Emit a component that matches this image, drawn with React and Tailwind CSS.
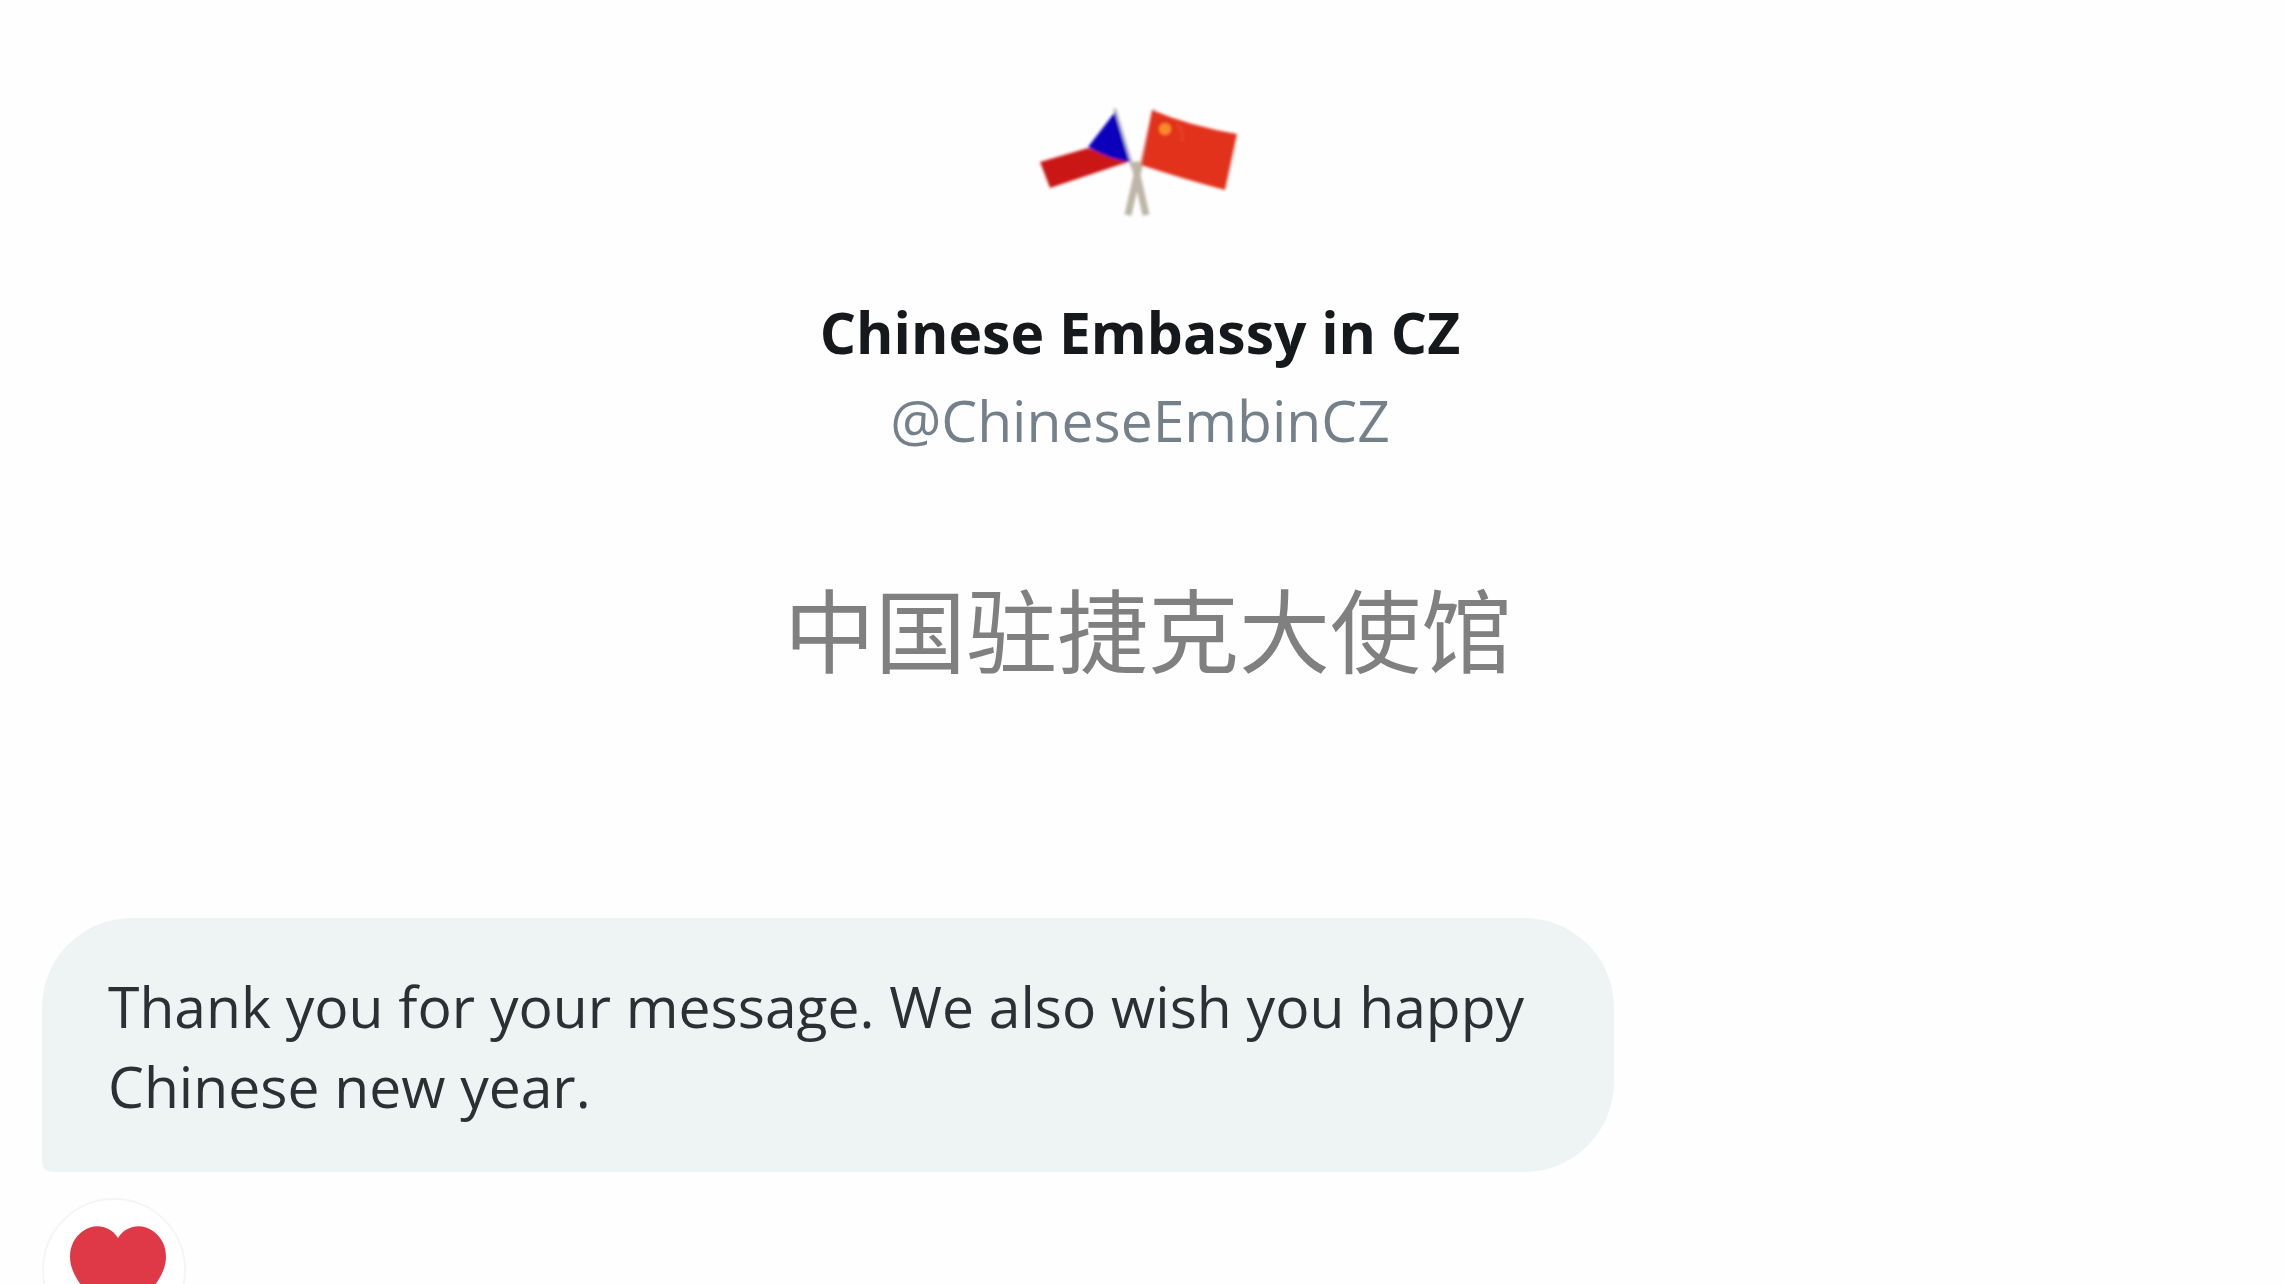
import React, { useState } from 'react';

const FlagsAvatar = () => (
  <svg viewBox="0 0 280 180" className="h-[180px] w-[280px]" role="img" aria-label="Crossed Czech and Chinese flags">
    <defs>
      <filter id="soften" x="-10%" y="-10%" width="120%" height="120%">
        <feGaussianBlur stdDeviation="1.5" />
      </filter>
    </defs>
    <g filter="url(#soften)">
      {/* Poles */}
      <path d="M115 30L132 86" stroke="#c9c6cc" strokeWidth="4" fill="none" strokeLinecap="round" />
      <path d="M154 31L141 86" stroke="#d8b5ae" strokeWidth="4" fill="none" strokeLinecap="round" />
      <path d="M134 82L146 135M140 82L128 135" stroke="#bdb6a6" strokeWidth="7" fill="none" />
      {/* Czech flag */}
      <path d="M40 82L88 68L131 81L50 108Z" fill="#cb1716" />
      <path d="M115 32L130 82Q108 79 88 67Z" fill="#0d06bd" />
      {/* Chinese flag */}
      <path d="M152 30Q190 46 237 54L225 110Q180 98 141 85Z" fill="#e2321f" />
      <circle cx="165" cy="49" r="6" fill="#f98a2b" />
      <path d="M177 44Q184 50 182 62" stroke="#e84526" strokeWidth="2" fill="none" />
    </g>
  </svg>
);

const ReactionButton = () => {
  const [liked, setLiked] = useState(true);

  return (
    <button
      type="button"
      aria-label="Heart reaction"
      aria-pressed={liked}
      onClick={() => setLiked(!liked)}
      className="mt-[26px] flex h-[144px] w-[144px] shrink-0 items-center justify-center rounded-full border-2 border-[#f5f5f6] bg-white"
    >
      <svg viewBox="-4 0 96 88" className="h-[88px] w-[96px] overflow-visible" fill={liked ? '#df3846' : '#d1d5db'}>
        <path d="M48 12C56 -1 72 -3 83 5C96 14 99 31 93 45C85 64 67 79 48 88C29 79 11 64 3 45C-3 31 0 14 13 5C24 -3 40 -1 48 12Z" />
      </svg>
    </button>
  );
};

const App = () => {
  return (
    <main className="flex h-screen flex-col overflow-hidden bg-[#fefefe] px-[42px] pt-20 font-['Open_Sans','Noto_Sans_CJK_SC',sans-serif]">
      {/* Profile */}
      <header className="flex shrink-0 flex-col items-center pr-1 text-center">
        <FlagsAvatar />
        <h1 className="mt-7 text-[57px] leading-[88px] font-bold text-[#15191c]">Chinese Embassy in CZ</h1>
        <p className="text-[57px] leading-[88px] text-[#74808a]">@ChineseEmbinCZ</p>
        <p className="mt-[94px] pl-4 font-['Noto_Sans_CJK_SC',sans-serif] text-[91px] leading-[136px] text-[#808080]">中国驻捷克大使馆</p>
      </header>

      {/* Messages */}
      <section className="mt-56 flex flex-col items-start">
        <p className="w-[1572px] max-w-full rounded-[90px] rounded-bl-[10px] bg-[#eef3f4] px-[66px] pt-12 pb-[46px] text-[57px] leading-[80px] text-[#2a3033]">
          Thank you for your message. We also wish you happy Chinese new year.
        </p>
        <ReactionButton />
      </section>
    </main>
  );
};

export default App;
